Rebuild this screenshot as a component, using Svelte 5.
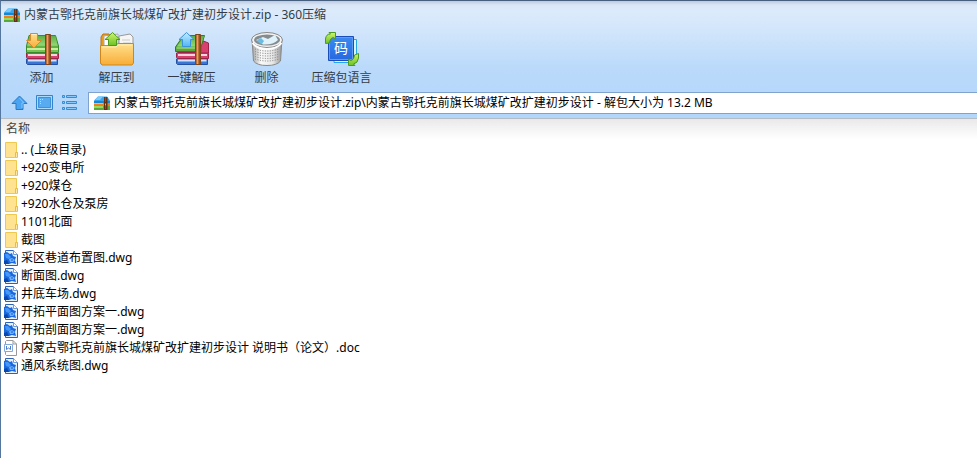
<script>
  const archive = '内蒙古鄂托克前旗长城煤矿改扩建初步设计';
  const address = `${archive}.zip\\${archive} - 解包大小为 13.2 MB`;
  const tools = [
    { icon: 'add', label: '添加' },
    { icon: 'extract', label: '解压到' },
    { icon: 'quick', label: '一键解压' },
    { icon: 'trash', label: '删除' },
    { icon: 'lang', label: '压缩包语言' }
  ];
  const files = [
    { type: 'folder', name: '.. (上级目录)' },
    { type: 'folder', name: '+920变电所' },
    { type: 'folder', name: '+920煤仓' },
    { type: 'folder', name: '+920水仓及泵房' },
    { type: 'folder', name: '1101北面' },
    { type: 'folder', name: '截图' },
    { type: 'dwg', name: '采区巷道布置图.dwg' },
    { type: 'dwg', name: '断面图.dwg' },
    { type: 'dwg', name: '井底车场.dwg' },
    { type: 'dwg', name: '开拓平面图方案一.dwg' },
    { type: 'dwg', name: '开拓剖面图方案一.dwg' },
    { type: 'doc', name: `${archive} 说明书（论文）.doc` },
    { type: 'dwg', name: '通风系统图.dwg' }
  ];
</script>

{#snippet zipIcon()}
  <svg class="zip" width="16" height="14" viewBox="0 0 16 14" aria-hidden="true">
    <path d="M4 .5H13L16 4.500V7H0V4.500Z" fill="#35a6ef" />
    <path d="M4 .5H9L6 4H1Z" fill="#7dcbfa" />
    <path d="M0 5H16V7H0Z" fill="#1a86d0" />
    <path d="M0 7H16V10H0Z" fill="#f07f1c" />
    <path d="M0 7H9V8H0Z" fill="#ffb566" />
    <path d="M0 10H16V14H0Z" fill="#58a83a" />
    <path d="M0 10H9V12H0Z" fill="#9bd95c" />
    <path d="M10 1H13.500V14H10Z" fill="#633013" />
    <path d="M11.500 1V6M11.500 10V13" stroke="#8f4d24" />
    <path d="M11.500 7.500V9.500" stroke="#e9b65e" />
  </svg>
{/snippet}

<!-- open: the top book lies tilted, as on the one-click unpack button -->
{#snippet books(open)}
  <path d="M3.500 27.500H33.500V33.500H3.500L2.500 32.500V28Z" fill="#3a76d8" stroke="#2450a4" />
  <path d="M4 29.500H32.500" stroke="#cfe3fd" stroke-width="2" />
  <path d="M3.500 21.500H33L34.500 22.500V27.500H3.500L2.500 26.500V22Z" fill="#d8416e" stroke="#9b2349" />
  <path d="M4 24H33" stroke="#fad3de" stroke-width="2" />
  {#if open}
    <path d="M34.500 12V22H24L28 9.500Z" fill="#d8416e" stroke="#9b2349" />
    <path d="M9.500 4.500H30.500L27 16V20.500H1.500V16Z" fill="#57a93b" stroke="#337b24" />
    <path d="M10 5H30L26.500 15.500H3Z" fill="url(#green)" />
    <path d="M2.500 17H26" stroke="#b9e88f" />
  {:else}
    <path d="M5 4.500H31.500L34.500 15V21.500H2.500V15Z" fill="#79c355" stroke="#3a8a2c" />
    <path d="M5.500 5H31L33.500 14.500H3.500Z" fill="url(#green)" />
    <path d="M3 16H34" stroke="#4d9f36" />
    <path d="M3 18H34" stroke="#c5ef9f" stroke-width="2" />
  {/if}
  <path d="M21.500 3.500H26.500V33.500H21.500Z" fill="#bd7038" stroke="#7d451c" />
  <path d="M23.500 4V33" stroke="#e0a468" />
  <path d="M25.500 4V33" stroke="#96521f" />
{/snippet}

<div class="window">
  <header>
    <div class="title">{@render zipIcon()}<span>{archive}.zip - 360压缩</span></div>
    <div class="toolbar">
      {#each tools as tool}
        <button class="tool">
          <svg width="36" height="36" viewBox="0 0 36 36" aria-hidden="true">
            <defs>
              <linearGradient id="green" x2="0" y2="1"><stop stop-color="#5fae48" /><stop offset="1" stop-color="#94d874" /></linearGradient>
              <linearGradient id="gold" x2="0" y2="1"><stop stop-color="#ffe08f" /><stop offset="1" stop-color="#f8ad35" /></linearGradient>
              <linearGradient id="sky" x2="0" y2="1"><stop stop-color="#c4ecff" /><stop offset="1" stop-color="#52b6f5" /></linearGradient>
              <linearGradient id="lime" x2="0" y2="1"><stop stop-color="#d0f56a" /><stop offset="1" stop-color="#6cc226" /></linearGradient>
              <linearGradient id="steel"><stop stop-color="#a0a0a0" /><stop offset=".3" stop-color="#fafafa" /><stop offset=".7" stop-color="#e6e6e6" /><stop offset="1" stop-color="#949494" /></linearGradient>
              <linearGradient id="cobalt" x2="0" y2="1"><stop stop-color="#3a8bf2" /><stop offset="1" stop-color="#2767e0" /></linearGradient>
            </defs>
            {#if tool.icon === 'add'}
              {@render books(false)}
              <path d="M6.500 2.500H13.500V9.500H17.500L10 17 2.500 9.500H6.500Z" fill="url(#gold)" stroke="#d98a2c" />
              <path d="M7.500 3.500H12.500" stroke="#fff0c3" />
            {:else if tool.icon === 'extract'}
              <path d="M2 33V6L4 3H10L12 6V33Z" fill="#e99b20" stroke="#bd7519" />
              <path d="M5 5 19 3V17H5Z" fill="#fff" stroke="#aaa" />
              <path d="M20 5 31 3 34 6V18H20Z" fill="#f5f5f5" stroke="#999" />
              <path d="M23 9H31M24 12H32" stroke="#ccc" />
              <path d="M1.500 14.500H16L19 12.500H34.500V32L33 34H3L1.500 32Z" fill="url(#gold)" stroke="#cf871d" />
              <path d="M3 16H17L19 14H33" fill="none" stroke="#fff0b5" />
              <path d="M13.500 1.500 21 8.500H17.500V14.500H9.500V8.500H6Z" fill="url(#lime)" stroke="#4c991f" />
            {:else if tool.icon === 'quick'}
              {@render books(true)}
              <path d="M12.500 1.500 20 8.500H16.500V15.500H8.500V8.500H5Z" fill="url(#sky)" stroke="#3a93dd" />
            {:else if tool.icon === 'trash'}
              <path d="M3 8H33L31.500 30Q28 34.500 18 34.500T4.500 30Z" fill="url(#steel)" stroke="#888" />
              {#each [19, 21.5, 24, 26.5, 29] as y}
                <path d={`M6 ${y - 1}Q18 ${y + 3} 30 ${y - 1}`} fill="none" stroke="#7c7c7c" stroke-width="1" stroke-dasharray="1 1.500" />
              {/each}
              <ellipse cx="18" cy="9" rx="15.500" ry="7.500" fill="#f2f2f2" stroke="#888" />
              <ellipse cx="18" cy="9" rx="13" ry="5.500" fill="#858c90" />
              <path d="M7 9 14 6 19 8 26 4 29 9Q24 14 14 13.500Z" fill="#dff2fc" />
              <path d="M8 9 12 7 15 10 13 13Q9 12 8 9Z" fill="#6dbbe0" />
              <path d="M3.500 12Q8 18 18 18T32.500 12" fill="none" stroke="#fff" stroke-width="2" />
            {:else}
              <path d="M10 8.500H32.500V31.500H10Z" fill="#d9f4ff" stroke="#25a6e8" />
              <path d="M4.500 5.500H29.500V29.500H4.500Z" fill="url(#cobalt)" stroke="#1b4cb8" />
              <path d="M5.500 6.500H28.500V28.500H5.500Z" fill="none" stroke="#5f9df3" />
              <path d="M1.500 12.500V8Q2 3 6.500 3L5 1.500H11.500V8L9.500 6.500Q6 7 5.500 12Z" fill="url(#lime)" stroke="#4c991f" />
              <path d="M34.500 22.500V27Q34 32 29.500 33L31 34.500H24.500V28L26.500 29.500Q30 29 30.500 24Z" fill="url(#lime)" stroke="#4c991f" />
              <text x="17" y="22" text-anchor="middle" fill="#fff" font-size="14">码</text>
            {/if}
          </svg>
          <span>{tool.label}</span>
        </button>
      {/each}
    </div>
    <div class="nav">
      <button aria-label="向上">
        <svg width="17" height="16" viewBox="0 0 17 16"><path d="M8.500 1 16 8.500H12V14.500H5V8.500H1Z" fill="#4aa3f0" stroke="#2979c6" /><path d="M8.500 3 13 8H11V13" fill="none" stroke="#82c6fa" /></svg>
      </button>
      <button aria-label="预览">
        <svg width="17" height="16" viewBox="0 0 17 16"><path d="M.5 .5H16.500V14.500H.5Z" fill="#a8dafe" stroke="#3284cc" /><path d="M2.500 2.500H14.500V12.500H2.500Z" fill="#59abf0" stroke="#3f91dc" /><path d="M4.500 4V9M6 4.500H8" stroke="#b5dfff" stroke-dasharray="1 1" /></svg>
      </button>
      <button aria-label="列表">
        <svg width="17" height="16" viewBox="0 0 17 16" fill="#88c8fb" stroke="#398bd0"><path d="M1.500 .5H3.500V2.500H1.500ZM1.500 6.500H3.500V8.500H1.500ZM1.500 12.500H3.500V14.500H1.500ZM5.500 .5H15.500V2.500H5.500ZM5.500 6.500H15.500V8.500H5.500ZM5.500 12.500H15.500V14.500H5.500Z" /></svg>
      </button>
      <label class="address">{@render zipIcon()}<input aria-label="地址" value={address} /></label>
    </div>
  </header>
  <main>
    <table>
      <thead><tr><th>名称</th></tr></thead>
      <tbody>
        {#each files as file}
          <tr><td><div class="file">
            <svg width="16" height="16" viewBox="0 0 16 16" aria-hidden="true">
              {#if file.type === 'folder'}
                <path d="M2.500 .5H13.500V10L14.500 11V15.500H2.500Z" fill="#ffe391" stroke="#efc94f" />
                <path d="M12.500 15V10.500H14.500V15" fill="#ffe9a6" stroke="#e7bd43" />
              {:else if file.type === 'dwg'}
                <path d="M2.500 .5H10.500L14.500 4.500V15.500H2.500Z" fill="#e6f1ff" stroke="#2f62b5" />
                <path d="M10.500 .5V4.500H14.500" fill="#fff" stroke="#6f9bd8" />
                <path d="M1 3 4 2 7 4 9 3 10 6 13 7 12 10 13 14 9 13 6 14 1 14Z" fill="#1a68de" />
                <path d="M2 4 5 4 8 7 6 9 3 8Z" fill="#4598f8" />
                <path d="M6 9 9 8 12 10 10 12 7 12Z" fill="#6fb0fb" />
                <path d="M8 10H10" stroke="#1a5bcb" />
                <path d="M1 11 4 10 6 14H1Z" fill="#0a47ad" />
              {:else}
                <path d="M3.500 .5H10L13.500 4V15.500H3.500L2.500 14.500V1.500Z" fill="#fff" stroke="#999" />
                <path d="M10 .5V4H13.500" fill="none" stroke="#999" />
                <path d="M1.500 4.500H9.500V11.500H1.500Z" fill="#fff" stroke="#86a9dc" />
                <path d="M3.500 6V9.500L5.500 8 7.500 9.500V6" fill="none" stroke="#4d80cb" />
              {/if}
            </svg>
            <span>{file.name}</span>
          </div></td></tr>
        {/each}
      </tbody>
    </table>
  </main>
</div>

<style>
  :global(body) { margin: 0; background: #fff; }
  .window {
    box-sizing: border-box;
    min-height: 100vh;
    border-top: 1px solid #465f7e;
    border-left: 1px solid #55779f;
    font: 12px/18px "Noto Sans", "Noto Sans CJK SC", sans-serif;
    color: #000;
    overflow: hidden;
  }
  svg { display: block; flex: none; }
  header {
    background: linear-gradient(#bdcade 0, #d9e6f6 4px, #dcebfb 10px, #cfe4fb 35px, #bbdafa 65px, #b2d6fb 100%);
    border-bottom: 1px solid #b6bcc4;
  }
  .title {
    display: flex;
    align-items: center;
    gap: 4px;
    height: 26px;
    padding: 1px 0 0 3px;
    color: #333c46;
  }
  .toolbar { display: flex; height: 64px; padding-left: 3px; }
  button { border: 0; padding: 0; background: none; color: inherit; font: inherit; }
  .tool {
    display: flex;
    flex-direction: column;
    align-items: center;
    gap: 2px;
    width: 75px;
    padding-top: 3px;
    color: #333c46;
    white-space: nowrap;
  }
  .nav { display: flex; align-items: center; gap: 8px; padding: 0 0 4px 10px; }
  .address {
    display: flex;
    align-items: center;
    flex: 1;
    gap: 4px;
    height: 20px;
    margin-left: 2px;
    padding-left: 5px;
    border: 1px solid #7fa3cc;
    border-right: 0;
    background: #fff;
  }
  input {
    flex: 1;
    min-width: 0;
    border: 0;
    padding: 0;
    outline: 0;
    background: none;
    color: #000;
    font: inherit;
  }
  main { background: linear-gradient(#e9e9e9, #fff 20px); }
  table { width: 100%; border-collapse: collapse; }
  th { height: 20px; padding: 0 0 2px 5px; text-align: left; font-weight: 400; color: #444; }
  td { padding: 0; }
  .file { display: flex; align-items: center; gap: 2px; height: 18px; padding-left: 2px; white-space: nowrap; }
</style>
